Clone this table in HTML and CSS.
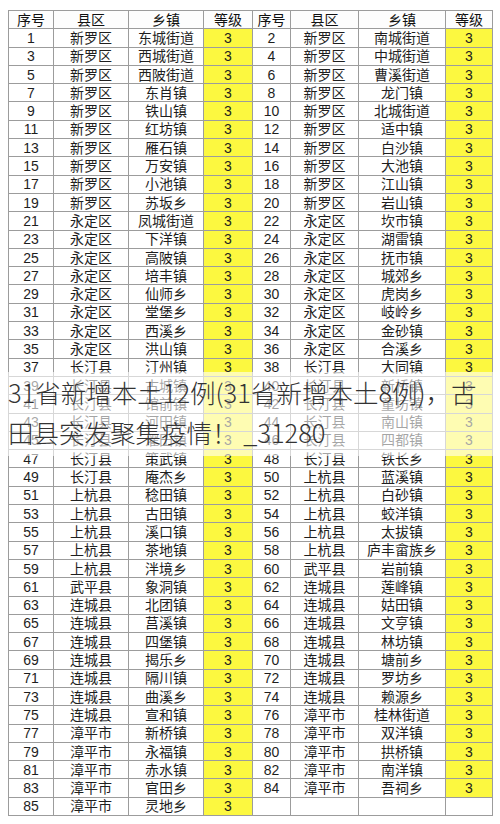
FILE: index.html
```html
<!DOCTYPE html>
<html lang="zh-CN">
<head>
<meta charset="utf-8">
<title>表格</title>
<link rel="stylesheet" href="styles.css">
</head>
<body>
<div class="page">
<table class="grid">
<colgroup>
<col class="c1"><col class="c2"><col class="c3"><col class="c4">
<col class="c5"><col class="c6"><col class="c7"><col class="c8">
</colgroup>
<thead>
<tr><th>序号</th><th>县区</th><th>乡镇</th><th>等级</th><th>序号</th><th>县区</th><th>乡镇</th><th>等级</th></tr>
</thead>
<tbody>
<tr><td>1</td><td>新罗区</td><td>东城街道</td><td class="y">3</td><td>2</td><td>新罗区</td><td>南城街道</td><td class="y">3</td></tr>
<tr><td>3</td><td>新罗区</td><td>西城街道</td><td class="y">3</td><td>4</td><td>新罗区</td><td>中城街道</td><td class="y">3</td></tr>
<tr><td>5</td><td>新罗区</td><td>西陂街道</td><td class="y">3</td><td>6</td><td>新罗区</td><td>曹溪街道</td><td class="y">3</td></tr>
<tr><td>7</td><td>新罗区</td><td>东肖镇</td><td class="y">3</td><td>8</td><td>新罗区</td><td>龙门镇</td><td class="y">3</td></tr>
<tr><td>9</td><td>新罗区</td><td>铁山镇</td><td class="y">3</td><td>10</td><td>新罗区</td><td>北城街道</td><td class="y">3</td></tr>
<tr><td>11</td><td>新罗区</td><td>红坊镇</td><td class="y">3</td><td>12</td><td>新罗区</td><td>适中镇</td><td class="y">3</td></tr>
<tr><td>13</td><td>新罗区</td><td>雁石镇</td><td class="y">3</td><td>14</td><td>新罗区</td><td>白沙镇</td><td class="y">3</td></tr>
<tr><td>15</td><td>新罗区</td><td>万安镇</td><td class="y">3</td><td>16</td><td>新罗区</td><td>大池镇</td><td class="y">3</td></tr>
<tr><td>17</td><td>新罗区</td><td>小池镇</td><td class="y">3</td><td>18</td><td>新罗区</td><td>江山镇</td><td class="y">3</td></tr>
<tr><td>19</td><td>新罗区</td><td>苏坂乡</td><td class="y">3</td><td>20</td><td>新罗区</td><td>岩山镇</td><td class="y">3</td></tr>
<tr><td>21</td><td>永定区</td><td>凤城街道</td><td class="y">3</td><td>22</td><td>永定区</td><td>坎市镇</td><td class="y">3</td></tr>
<tr><td>23</td><td>永定区</td><td>下洋镇</td><td class="y">3</td><td>24</td><td>永定区</td><td>湖雷镇</td><td class="y">3</td></tr>
<tr><td>25</td><td>永定区</td><td>高陂镇</td><td class="y">3</td><td>26</td><td>永定区</td><td>抚市镇</td><td class="y">3</td></tr>
<tr><td>27</td><td>永定区</td><td>培丰镇</td><td class="y">3</td><td>28</td><td>永定区</td><td>城郊乡</td><td class="y">3</td></tr>
<tr><td>29</td><td>永定区</td><td>仙师乡</td><td class="y">3</td><td>30</td><td>永定区</td><td>虎岗乡</td><td class="y">3</td></tr>
<tr><td>31</td><td>永定区</td><td>堂堡乡</td><td class="y">3</td><td>32</td><td>永定区</td><td>岐岭乡</td><td class="y">3</td></tr>
<tr><td>33</td><td>永定区</td><td>西溪乡</td><td class="y">3</td><td>34</td><td>永定区</td><td>金砂镇</td><td class="y">3</td></tr>
<tr><td>35</td><td>永定区</td><td>洪山镇</td><td class="y">3</td><td>36</td><td>永定区</td><td>合溪乡</td><td class="y">3</td></tr>
<tr><td>37</td><td>长汀县</td><td>汀州镇</td><td class="y">3</td><td>38</td><td>长汀县</td><td>大同镇</td><td class="y">3</td></tr>
<tr><td>39</td><td>长汀县</td><td>古城镇</td><td class="y">3</td><td>40</td><td>长汀县</td><td>新桥镇</td><td class="y">3</td></tr>
<tr><td>41</td><td>长汀县</td><td>馆前镇</td><td class="y">3</td><td>42</td><td>长汀县</td><td>童坊镇</td><td class="y">3</td></tr>
<tr><td>43</td><td>长汀县</td><td>河田镇</td><td class="y">3</td><td>44</td><td>长汀县</td><td>南山镇</td><td class="y">3</td></tr>
<tr><td>45</td><td>长汀县</td><td>濯田镇</td><td class="y">3</td><td>46</td><td>长汀县</td><td>四都镇</td><td class="y">3</td></tr>
<tr><td>47</td><td>长汀县</td><td>策武镇</td><td class="y">3</td><td>48</td><td>长汀县</td><td>铁长乡</td><td class="y">3</td></tr>
<tr><td>49</td><td>长汀县</td><td>庵杰乡</td><td class="y">3</td><td>50</td><td>上杭县</td><td>蓝溪镇</td><td class="y">3</td></tr>
<tr><td>51</td><td>上杭县</td><td>稔田镇</td><td class="y">3</td><td>52</td><td>上杭县</td><td>白砂镇</td><td class="y">3</td></tr>
<tr><td>53</td><td>上杭县</td><td>古田镇</td><td class="y">3</td><td>54</td><td>上杭县</td><td>蛟洋镇</td><td class="y">3</td></tr>
<tr><td>55</td><td>上杭县</td><td>溪口镇</td><td class="y">3</td><td>56</td><td>上杭县</td><td>太拔镇</td><td class="y">3</td></tr>
<tr><td>57</td><td>上杭县</td><td>茶地镇</td><td class="y">3</td><td>58</td><td>上杭县</td><td>庐丰畲族乡</td><td class="y">3</td></tr>
<tr><td>59</td><td>上杭县</td><td>泮境乡</td><td class="y">3</td><td>60</td><td>武平县</td><td>岩前镇</td><td class="y">3</td></tr>
<tr><td>61</td><td>武平县</td><td>象洞镇</td><td class="y">3</td><td>62</td><td>连城县</td><td>莲峰镇</td><td class="y">3</td></tr>
<tr><td>63</td><td>连城县</td><td>北团镇</td><td class="y">3</td><td>64</td><td>连城县</td><td>姑田镇</td><td class="y">3</td></tr>
<tr><td>65</td><td>连城县</td><td>莒溪镇</td><td class="y">3</td><td>66</td><td>连城县</td><td>文亨镇</td><td class="y">3</td></tr>
<tr><td>67</td><td>连城县</td><td>四堡镇</td><td class="y">3</td><td>68</td><td>连城县</td><td>林坊镇</td><td class="y">3</td></tr>
<tr><td>69</td><td>连城县</td><td>揭乐乡</td><td class="y">3</td><td>70</td><td>连城县</td><td>塘前乡</td><td class="y">3</td></tr>
<tr><td>71</td><td>连城县</td><td>隔川镇</td><td class="y">3</td><td>72</td><td>连城县</td><td>罗坊乡</td><td class="y">3</td></tr>
<tr><td>73</td><td>连城县</td><td>曲溪乡</td><td class="y">3</td><td>74</td><td>连城县</td><td>赖源乡</td><td class="y">3</td></tr>
<tr><td>75</td><td>连城县</td><td>宣和镇</td><td class="y">3</td><td>76</td><td>漳平市</td><td>桂林街道</td><td class="y">3</td></tr>
<tr><td>77</td><td>漳平市</td><td>新桥镇</td><td class="y">3</td><td>78</td><td>漳平市</td><td>双洋镇</td><td class="y">3</td></tr>
<tr><td>79</td><td>漳平市</td><td>永福镇</td><td class="y">3</td><td>80</td><td>漳平市</td><td>拱桥镇</td><td class="y">3</td></tr>
<tr><td>81</td><td>漳平市</td><td>赤水镇</td><td class="y">3</td><td>82</td><td>漳平市</td><td>南洋镇</td><td class="y">3</td></tr>
<tr><td>83</td><td>漳平市</td><td>官田乡</td><td class="y">3</td><td>84</td><td>漳平市</td><td>吾祠乡</td><td class="y">3</td></tr>
<tr><td>85</td><td>漳平市</td><td>灵地乡</td><td class="y">3</td><td></td><td></td><td></td><td></td></tr>
</tbody>
</table>
<div class="caption">31省新增本土12例(31省新增本土8例)，古田县突发聚集疫情！ _31280</div>
</div>
</body>
</html>
```
FILE: styles.css
```css
html, body {
  margin: 0;
  padding: 0;
  background: #ffffff;
}
.page {
  position: relative;
  width: 500px;
  height: 824px;
  padding: 10px 0 0 8px;
  box-sizing: border-box;
  font-family: "Liberation Sans", "Noto Sans CJK SC", sans-serif;
}
.grid {
  border-collapse: collapse;
  table-layout: fixed;
  width: 484px;
  color: #1e1e1e;
  font-size: 14px;
}
.c1 { width: 45px; }
.c2 { width: 75px; }
.c3 { width: 75px; }
.c4 { width: 49px; }
.c5 { width: 38px; }
.c6 { width: 68px; }
.c7 { width: 87px; }
.c8 { width: 47px; }
.grid tr {
  height: 18.3px;
}
.grid th, .grid td {
  border: 1px solid #9c9c9c;
  padding: 0;
  text-align: center;
  vertical-align: middle;
  line-height: 12px;
  white-space: nowrap;
  overflow: hidden;
}
.grid th {
  font-weight: normal;
  color: #111;
  background: #fdfdfd;
}
.grid td.y {
  background: #fcf840;
}
.caption {
  position: absolute;
  left: 0;
  top: 372px;
  width: 500px;
  padding-left: 8px;
  box-sizing: border-box;
  font-size: 25.5px;
  line-height: 40px;
  font-weight: 300;
  color: #333333;
  background: rgba(255, 255, 255, 0.6);
  font-family: "Noto Sans CJK SC", "Liberation Sans", sans-serif;
  word-break: break-all;
  height: 84px;
  overflow: hidden;
}
```
